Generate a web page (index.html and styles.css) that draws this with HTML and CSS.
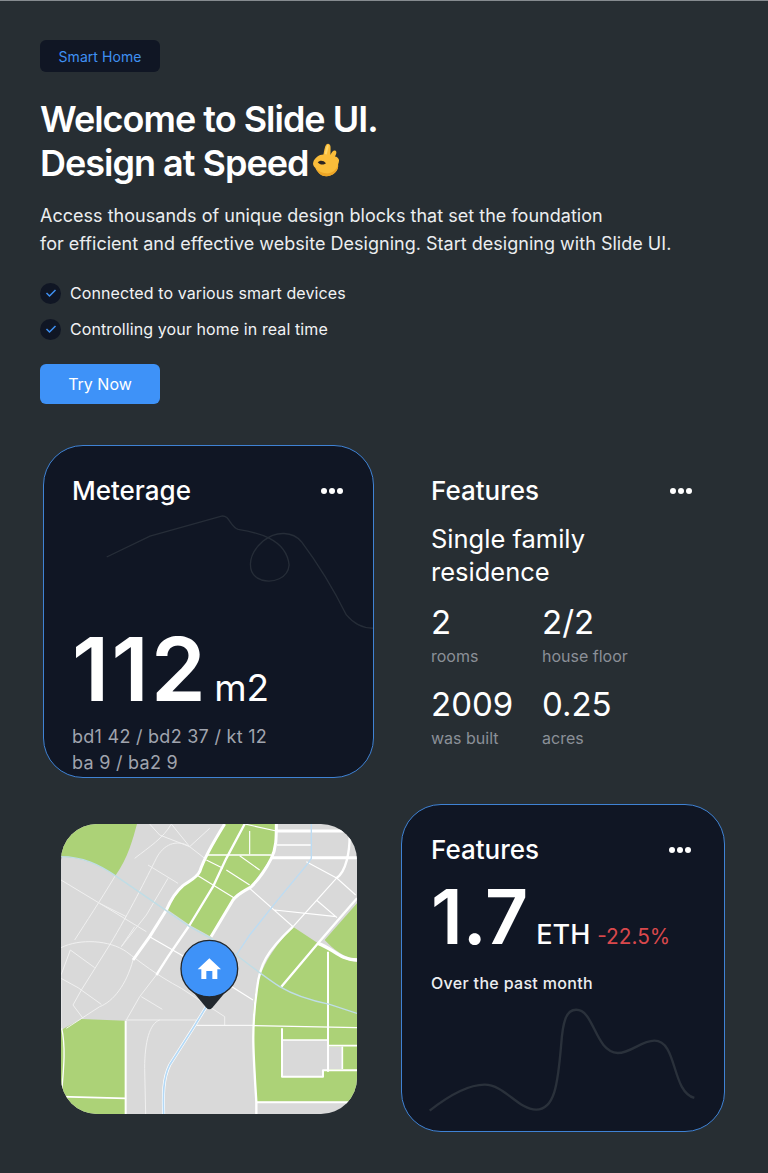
FILE: index.html
```html
<!DOCTYPE html>
<html lang="en">
<head>
  <meta charset="UTF-8" />
  <meta name="viewport" content="width=device-width, initial-scale=1.0"/>
  <title>Welcome to Slide UI</title>
  <link rel="stylesheet" href="styles.css">
</head>
<body>

<section class="hero">
  <span class="badge">Smart Home</span>
  <h1>Welcome to Slide UI.<br>Design at Speed<svg class="ok-hand" viewBox="40 8 88 106" aria-hidden="true">
    <path fill="#fabd3a" d="M44 68C48 55 62 44 76 44C78 32 80 18 85 12C90 8 97 10 98 18C99 26 98 36 98 45C102 36 108 29 114 32C119 35 116 44 112 50C118 50 125 56 125 62C125 66 124 70 122 75C125 95 105 112 85 112C65 112 55 95 50 85C44 80 42 74 44 68Z"/>
    <path fill="#eda526" d="M85 112C105 112 125 95 122 75C118 92 102 104 84 103C70 102 60 95 52 86C58 98 68 112 85 112Z"/>
    <path fill="#2a2422" d="M58 68C64 61 76 61 84 71C76 78 64 76 58 68Z"/>
    <path fill="#fdd76e" d="M80 42C82 32 84 22 88 15C91 13 93 15 92 20C90 28 88 36 86 44Z"/>
  </svg></h1>
  <p class="lead">Access thousands of unique design blocks that set the foundation<br>for efficient and effective website Designing. Start designing with Slide UI.</p>
  <ul class="checks">
    <li><span class="tick"><svg viewBox="0 0 12 10" aria-hidden="true"><path d="M1.5 5l3 3 6-6"/></svg></span>Connected to various smart devices</li>
    <li><span class="tick"><svg viewBox="0 0 12 10" aria-hidden="true"><path d="M1.5 5l3 3 6-6"/></svg></span>Controlling your home in real time</li>
  </ul>
  <button type="button" class="btn">Try Now</button>
</section>

<section class="cards">
  <div class="card meter">
    <div class="card-head">
      <h2>Meterage</h2>
      <span class="dots"><i></i><i></i><i></i></span>
    </div>
    <svg class="meter-line" viewBox="228 240 802 345" aria-hidden="true">
      <path d="M230 366L360 303L575 243C600 240 600 275 625 283C680 292 770 310 778 390C775 430 730 445 695 435C650 420 650 360 700 318C740 285 790 290 815 320C860 380 900 440 950 540C975 570 1000 580 1030 580"/>
    </svg>
    <div class="meter-value"><span class="big">112</span><span class="unit">m2</span></div>
    <p class="meter-rooms">bd1 42 / bd2 37 / kt 12<br>ba 9 / ba2 9</p>
  </div>

  <div class="features">
    <div class="card-head">
      <h2>Features</h2>
      <span class="dots"><i></i><i></i><i></i></span>
    </div>
    <p class="home-type">Single family<br>residence</p>
    <div class="stats">
      <div><b>2</b><span>rooms</span></div>
      <div><b>2/2</b><span>house floor</span></div>
      <div><b>2009</b><span>was built</span></div>
      <div><b>0.25</b><span>acres</span></div>
    </div>
  </div>

  <div class="map">
    <svg viewBox="34 27 888 870" role="img" aria-label="Map">
      <rect x="34" y="27" width="888" height="870" fill="#d9d9d9"/>
      <g fill="#acd277">
        <path d="M34 27H262C250 70 235 130 197 182C150 150 100 125 34 125Z"/>
        <path d="M355 285L385 225L440 185L470 120L525 27H680V90L660 135L600 220L555 250L484 365L420 330Z"/>
        <path d="M922 265L825 375C850 400 880 430 922 430Z"/>
        <path d="M730 335L805 385C850 405 880 440 922 440V860H620C620 760 605 700 610 600C615 500 640 430 730 335Z"/>
        <path d="M34 645L95 612L228 617V897H34Z"/>
      </g>
      <g fill="#d9d9d9">
        <path d="M697 675H832V765H820V785H697Z"/>
        <path d="M838 695H878V762H838Z"/>
      </g>
      <g fill="none" stroke="#f0f0f0" stroke-width="3">
        <path d="M255 130C300 95 340 70 365 27"/>
        <path d="M300 27L330 60L420 95L480 40"/>
        <path d="M365 27L420 95L465 130"/>
        <path d="M420 95C380 70 340 90 320 130C290 190 240 290 180 390L95 525L70 570L100 610"/>
        <path d="M34 195L150 265L290 350"/>
        <path d="M295 150L385 205"/>
        <path d="M355 190L290 300L215 395"/>
        <path d="M197 182C150 260 110 320 75 375"/>
        <path d="M150 265L230 305"/>
        <path d="M34 398C90 370 180 375 230 410C270 440 320 480 395 520L525 605V630"/>
        <path d="M62 405L135 458M62 405L34 480V640"/>
        <path d="M34 490L85 518L155 568"/>
        <path d="M250 435C230 510 190 560 150 575L50 640"/>
        <path d="M320 480L270 545L230 615M275 545L338 583"/>
        <path d="M228 615H440"/>
        <path d="M330 615C300 625 285 680 285 760L288 897"/>
        <path d="M255 335L215 395"/>
      </g>
      <g fill="none" stroke="#fff" stroke-width="3.5">
        <path d="M300 365L395 420L610 555"/>
        <path d="M600 220L730 335L860 190M675 285L860 305M770 140L862 190L918 240M800 255L862 308"/>
        <path d="M470 135L520 160M445 182L555 250M530 165L600 210M570 122L630 165M600 48V118"/>
        <path d="M585 27L680 48"/>
      </g>
      <g fill="none" stroke="#fff" stroke-linejoin="round">
        <path stroke-width="9" d="M250 435L300 365L350 285C365 250 385 225 400 212C420 197 440 190 450 170C465 125 495 75 525 27"/>
        <path stroke-width="7" d="M320 480L355 425L420 330L490 215L530 130L585 27"/>
        <path stroke-width="9" d="M484 365L550 255C565 235 590 225 605 215C630 190 650 160 665 130C680 100 680 70 680 27"/>
        <path stroke-width="9" d="M665 128H922"/>
        <path stroke-width="5" d="M470 120H665"/>
        <path stroke-width="9" d="M682 48H922"/>
        <path stroke-width="5" d="M682 90H785"/>
        <path stroke-width="7" d="M860 190C890 170 900 110 900 60"/>
        <path stroke-width="7" d="M922 250L805 385L695 515"/>
        <path stroke-width="10" d="M805 385C850 400 870 435 922 435"/>
        <path stroke-width="6" d="M835 410V770"/>
        <path stroke-width="7" d="M730 335C650 410 630 450 622 520C605 640 610 700 620 860V897"/>
        <path stroke-width="6" d="M620 862H922"/>
        <path stroke-width="4" d="M610 632L922 638"/>
        <path stroke-width="6" d="M697 640V785H820V766H922"/>
        <path stroke-width="5" d="M697 675H832M838 692H922M878 695V762"/>
        <path stroke-width="6" d="M228 617V897"/>
        <path stroke-width="5" d="M34 845L228 850"/>
        <path stroke-width="3" d="M440 631H610"/>
        <path stroke-width="4" d="M36 640C50 700 40 780 36 830"/>
      </g>
      <g fill="none">
        <path stroke="#bfdde6" stroke-width="4" d="M34 125C100 125 150 150 197 182L340 280L420 335L484 370L560 420C600 450 650 490 690 515C740 545 800 560 840 568L922 595"/>
        <path stroke="#bcdcf3" stroke-width="4" d="M785 27V130L775 145L680 260L600 360L560 420"/>
        <path stroke="#fff" stroke-width="9" d="M470 575L430 640L360 750C340 790 340 840 342 897"/>
        <path stroke="#b4d9f6" stroke-width="5" d="M470 575L430 640L360 750C340 790 340 840 342 897"/>
      </g>
      <path fill="#22282e" d="M430 530H528L488 578Q479 587 470 578Z"/>
      <circle cx="479" cy="461" r="85" fill="#3e92f8" stroke="#22282e" stroke-width="4"/>
      <path fill="#fff" d="M479 430L514 463H503V492H488V468H470V492H455V463H444Z"/>
    </svg>
  </div>

  <div class="card eth">
    <div class="card-head">
      <h2>Features</h2>
      <span class="dots"><i></i><i></i><i></i></span>
    </div>
    <div class="eth-value"><span class="big">1.7</span><span class="unit">ETH</span><span class="change">-22.5%</span></div>
    <p class="eth-note">Over the past month</p>
    <svg class="eth-line" viewBox="100 640 805 315" aria-hidden="true">
      <path d="M105 948C160 905 220 870 270 870C330 870 370 945 425 945C480 945 490 870 500 750C505 680 515 645 545 645C600 645 600 770 670 775C710 775 740 738 780 738C850 738 830 890 900 910"/>
    </svg>
  </div>
</section>

</body>
</html>
```

FILE: styles.css
```css
* {
  box-sizing: border-box;
}

body {
  margin: 0;
  width: 768px;
  height: 1173px;
  overflow: hidden;
  background: #272e33;
  border-top: 1px solid #868b90;
  font-family: Inter, "Liberation Sans", sans-serif;
  color: #fff;
}

h1, h2, p, ul {
  margin: 0;
  padding: 0;
}

.hero {
  padding: 39px 40px 0;
}

.badge {
  display: block;
  width: 120px;
  height: 32px;
  line-height: 33px;
  text-align: center;
  font-size: 14px;
  letter-spacing: 0.05px;
  color: #3f90f2;
  background: #101624;
  border-radius: 6px;
}

h1 {
  margin-top: 25px;
  font-size: 36px;
  line-height: 44px;
  font-weight: 600;
  letter-spacing: -1px;
}

.ok-hand {
  width: 28px;
  height: 34px;
  margin-left: 4px;
  vertical-align: -1px;
}

.lead {
  margin-top: 17px;
  font-size: 18px;
  line-height: 28px;
  letter-spacing: 0.02px;
  color: #eceef0;
}

.checks {
  list-style: none;
  margin-top: 24px;
}

.checks li {
  display: flex;
  align-items: center;
  gap: 9px;
  height: 22px;
  margin-bottom: 14px;
  font-size: 16px;
  letter-spacing: 0.09px;
  color: #f2f3f5;
}

.tick {
  width: 21px;
  height: 21px;
  border-radius: 50%;
  background: #101624;
  display: flex;
  align-items: center;
  justify-content: center;
}

.tick svg {
  width: 12px;
  height: 10px;
  fill: none;
  stroke: #3f90f2;
  stroke-width: 1.5;
}

.btn {
  display: block;
  width: 120px;
  height: 40px;
  margin-top: 24px;
  background: #3e92f8;
  border: none;
  border-radius: 6px;
  color: #fff;
  font-family: inherit;
  font-size: 16px;
  cursor: pointer;
}

.cards {
  display: grid;
  grid-template-columns: 331px 324px;
  column-gap: 27px;
  row-gap: 26px;
  padding: 41px 0 0 43px;
}

.card {
  background: #101624;
  border: 1px solid #3f82d4;
  border-radius: 40px;
}

.card-head {
  display: flex;
  justify-content: space-between;
  align-items: center;
}

h2 {
  font-size: 26px;
  line-height: 32px;
  font-weight: 500;
}

.dots {
  display: flex;
  gap: 2px;
}

.dots i {
  width: 6px;
  height: 6px;
  border-radius: 50%;
  background: #fff;
}

.meter {
  height: 333px;
  padding: 29px 0 0 28px;
}

.meter .card-head {
  padding-right: 30px;
}

.meter-line {
  display: block;
  width: 267px;
  height: 115px;
  margin: 8px 0 0 34px;
  fill: none;
  stroke: #262d38;
  stroke-width: 4;
}

.meter-value {
  display: flex;
  align-items: baseline;
  gap: 6px;
  margin-top: -11px;
}

.meter-value .big {
  font-size: 88px;
  line-height: 100px;
  font-weight: 600;
  letter-spacing: 2.3px;
}

.meter-value .unit {
  font-size: 37px;
}

.meter-rooms {
  margin-top: 5px;
  font-size: 18px;
  line-height: 26px;
  letter-spacing: 0.27px;
  color: #a0a4ae;
}

.features {
  padding: 30px 30px 0 30px;
}

.features .card-head {
  padding-right: 3px;
}

.home-type {
  margin-top: 15px;
  font-size: 25.5px;
  line-height: 33px;
}

.stats {
  display: grid;
  grid-template-columns: 111px 1fr;
  row-gap: 15px;
  margin-top: 13px;
}

.stats b {
  display: block;
  font-size: 33px;
  line-height: 42px;
  font-weight: 400;
}

.stats span {
  display: block;
  margin-top: 1px;
  font-size: 16px;
  line-height: 24px;
  color: #8b9098;
}

.map {
  width: 296px;
  height: 290px;
  margin: 20px 0 0 18px;
  border-radius: 36px;
  overflow: hidden;
}

.map svg {
  display: block;
  width: 296px;
  height: 290px;
}

.eth {
  height: 328px;
  padding: 29px 33px 0 29px;
}

.eth-value {
  display: flex;
  align-items: baseline;
  margin-top: 9px;
}

.eth-value .big {
  font-size: 75px;
  line-height: 84px;
  font-weight: 600;
}

.eth-value .unit {
  margin-left: 8px;
  font-size: 27px;
  font-weight: 500;
}

.eth-value .change {
  margin-left: 7px;
  font-size: 20.8px;
  color: #d9484c;
}

.eth-note {
  margin-top: 12px;
  font-size: 16px;
  line-height: 24px;
  font-weight: 500;
  letter-spacing: 0.32px;
  color: #eceef0;
}

.eth-line {
  display: block;
  width: 268px;
  height: 105px;
  margin: 13px 0 0 -3px;
  fill: none;
  stroke: #2a313b;
  stroke-width: 7;
}
```
